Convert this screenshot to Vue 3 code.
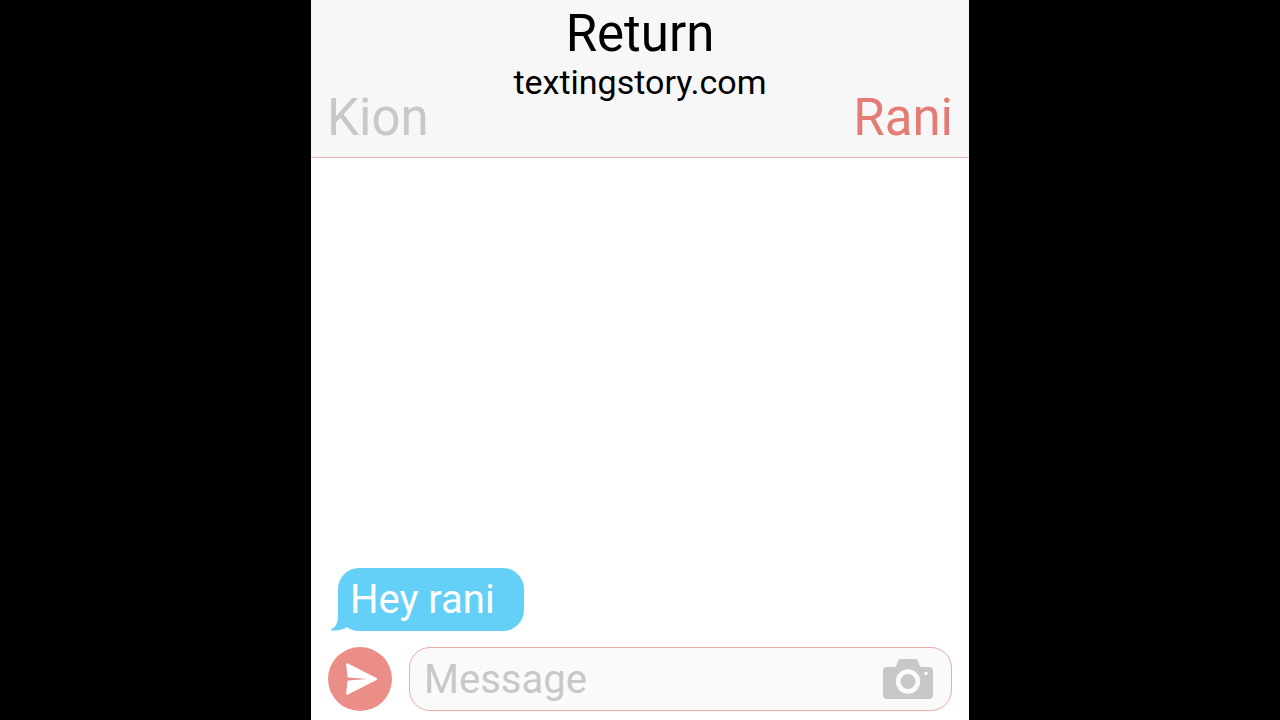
<script setup>
import { ref } from 'vue'

const sender = 'Kion'
const recipient = 'Rani'
const draft = ref('')
const messages = ref([{ id: 1, text: 'Hey rani' }])

function send() {
  const text = draft.value.trim()
  if (!text) return
  messages.value.push({ id: messages.value.length + 1, text })
  draft.value = ''
}
</script>

<template>
  <div class="stage">
    <main class="phone">
      <header class="top">
        <button type="button" class="name">{{ sender }}</button>
        <div class="heading">
          <h1 class="title">Return</h1>
          <p class="site">textingstory.com</p>
        </div>
        <button type="button" class="name active">{{ recipient }}</button>
      </header>

      <section class="thread" aria-label="Conversation">
        <div v-for="m in messages" :key="m.id" class="bubble">
          <svg class="tail" viewBox="0 0 30 24" aria-hidden="true">
            <path d="M8 0V8C8 15 6 21 0 23C6 24.500 13 23 17 20L30 24V0Z" fill="#64d0f7" />
          </svg>
          <span class="words">{{ m.text }}</span>
        </div>
      </section>

      <form class="composer" @submit.prevent="send">
        <button type="submit" class="send" aria-label="Send">
          <svg viewBox="0 0 64 64" aria-hidden="true">
            <path
              d="M20 16.500Q18 15.500 18.200 18L19.400 29.400Q19.600 30.500 20.600 30.600L39 32L20.600 33.400Q19.600 33.500 19.400 34.600L18.200 46Q18 48.500 20 47.500L48.500 33Q50 32 48.500 31Z"
              fill="#fff"
            />
          </svg>
        </button>
        <div class="field">
          <input v-model="draft" type="text" placeholder="Message" aria-label="Message" />
          <button type="button" class="camera" aria-label="Add photo">
            <svg viewBox="0 0 50 40" aria-hidden="true">
              <path
                d="M4 8H11Q13 8 13.700 6L15 2Q15.700 0 18 0H32Q34.300 0 35 2L36.300 6Q37 8 39 8H46Q50 8 50 12V36Q50 40 46 40H4Q0 40 0 36V12Q0 8 4 8Z"
                fill="#c7c7c7"
              />
              <circle cx="25" cy="22.500" r="9.800" fill="none" stroke="#fafafa" stroke-width="4.800" />
              <circle cx="43" cy="14.500" r="1.800" fill="#fafafa" />
            </svg>
          </button>
        </div>
      </form>
    </main>
  </div>
</template>

<style>
body {
  margin: 0;
  background: #000;
}
</style>

<style scoped>
.stage {
  display: flex;
  justify-content: center;
  min-height: 100vh;
  background: #000;
  font-family: Roboto, "Liberation Sans", sans-serif;
}

.phone {
  display: flex;
  flex-direction: column;
  width: 100%;
  max-width: 658px;
  background: #fff;
}

button {
  padding: 0;
  border: 0;
  background: none;
  font: inherit;
  cursor: pointer;
}

svg {
  display: block;
  width: 100%;
}

.top {
  display: grid;
  grid-template-columns: 1fr auto 1fr;
  padding: 4px 16px 7px;
  border-bottom: 1px solid #ecb4b0;
  background: #f7f7f7;
}

.name {
  align-self: end;
  justify-self: start;
  margin-top: 82px;
  color: #c8c8c8;
  font-size: 51px;
  line-height: 64px;
}

.name.active {
  justify-self: end;
  color: #e47b75;
}

.heading {
  color: #000;
  text-align: center;
}

.title,
.site {
  margin: 0;
  font-weight: 400;
}

.title {
  font-size: 51px;
  line-height: 60px;
}

.site {
  font-size: 34px;
  line-height: 36px;
}

.thread {
  display: flex;
  flex: 1;
  flex-direction: column;
  justify-content: flex-end;
  align-items: flex-start;
  gap: 12px;
  padding: 16px 27px;
}

.bubble {
  position: relative;
  padding: 1px 29px 0 12px;
  border-radius: 21px;
  background: #64d0f7;
  color: #fff;
  font-size: 40px;
  line-height: 62px;
}

.tail {
  position: absolute;
  bottom: 0;
  left: -8px;
  width: 30px;
}

.words {
  position: relative;
}

.composer {
  display: flex;
  gap: 17px;
  padding: 0 17px 9px;
}

.send {
  flex: none;
  width: 64px;
  height: 64px;
  border-radius: 50%;
  background: #eb8e87;
}

.field {
  display: flex;
  flex: 1;
  align-items: center;
  min-width: 0;
  padding: 0 18px 0 14px;
  border: 1px solid #e9aeab;
  border-radius: 21px;
  background: #fafafa;
}

.field input {
  flex: 1;
  min-width: 0;
  padding: 1px 0 0;
  border: 0;
  outline: 0;
  background: none;
  color: #000;
  font: inherit;
  font-size: 40px;
}

.field input::placeholder {
  color: #c8c8c8;
  opacity: 1;
}

.camera {
  flex: none;
  width: 50px;
}
</style>
